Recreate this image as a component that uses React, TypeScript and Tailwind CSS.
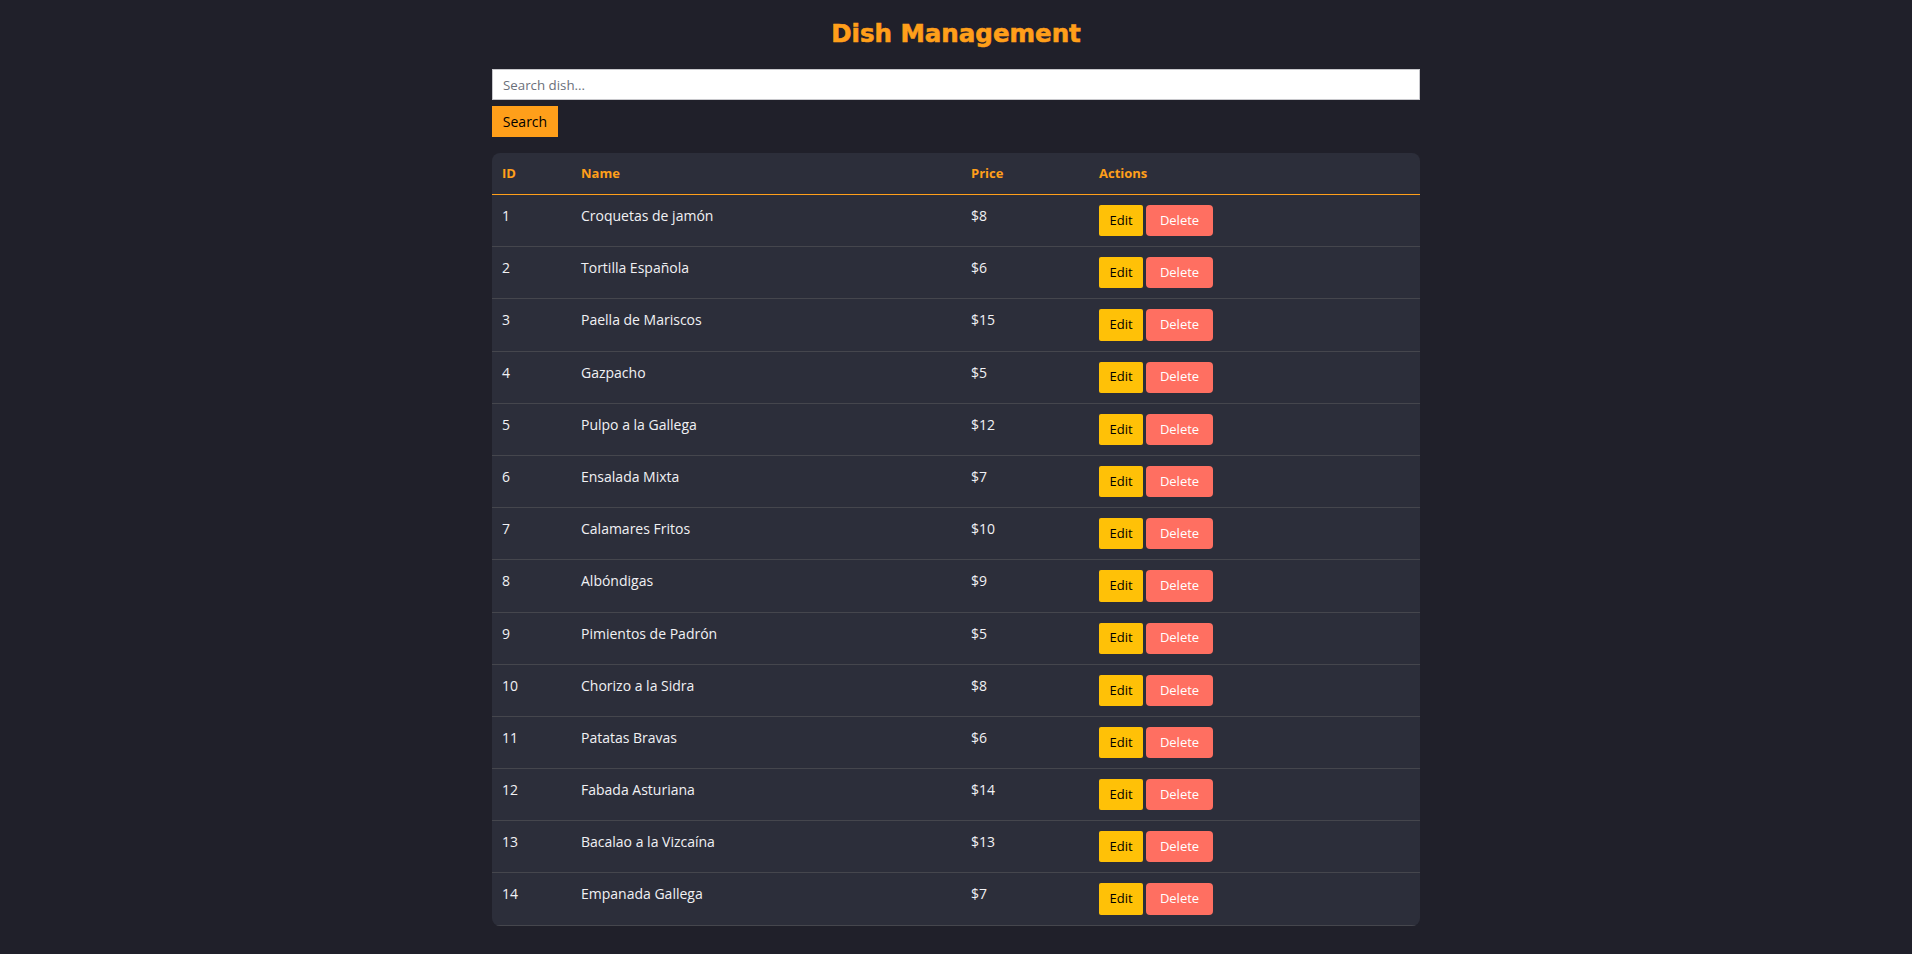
import { useState } from 'react';

const dishes = [
  { id: 1, name: 'Croquetas de jamón', price: 8 },
  { id: 2, name: 'Tortilla Española', price: 6 },
  { id: 3, name: 'Paella de Mariscos', price: 15 },
  { id: 4, name: 'Gazpacho', price: 5 },
  { id: 5, name: 'Pulpo a la Gallega', price: 12 },
  { id: 6, name: 'Ensalada Mixta', price: 7 },
  { id: 7, name: 'Calamares Fritos', price: 10 },
  { id: 8, name: 'Albóndigas', price: 9 },
  { id: 9, name: 'Pimientos de Padrón', price: 5 },
  { id: 10, name: 'Chorizo a la Sidra', price: 8 },
  { id: 11, name: 'Patatas Bravas', price: 6 },
  { id: 12, name: 'Fabada Asturiana', price: 14 },
  { id: 13, name: 'Bacalao a la Vizcaína', price: 13 },
  { id: 14, name: 'Empanada Gallega', price: 7 },
];

export default function App() {
  const [query, setQuery] = useState('');

  return (
    <div className="min-h-screen bg-[#20202a] font-['Open_Sans',sans-serif] text-[#f1f1f4]">
      <div className="w-[928px] mx-auto pt-[20px] pb-10">
        <h1 className="text-center font-['DejaVu_Sans',sans-serif] font-bold text-[24.5px] leading-[28px] text-[#ff9f1a] [-webkit-text-stroke:0.6px_#ff9f1a]">
          Dish Management
        </h1>

        <input
          type="text"
          value={query}
          onChange={(e) => setQuery(e.target.value)}
          placeholder="Search dish..."
          className="block w-full h-[31px] mt-[21px] px-[10px] bg-white border border-[#c8c8cc] text-[13.3px] text-black placeholder:text-[#6b6f7a] outline-none"
        />
        <button className="block mt-[6px] h-[31px] w-[66px] bg-[#ff9f1a] text-black text-[14px]">
          Search
        </button>

        <div className="mt-[16px] rounded-lg bg-[#2c2e3a] overflow-hidden">
          <table className="w-full table-fixed border-collapse">
            <colgroup>
              <col className="w-[79px]" />
              <col className="w-[390px]" />
              <col className="w-[128px]" />
              <col />
            </colgroup>
            <thead>
              <tr className="border-b border-[#ff9f1a]">
                <th className="p-[10px] text-left align-top text-[13px] leading-[21px] font-bold text-[#ff9f1a]">ID</th>
                <th className="p-[10px] text-left align-top text-[13px] leading-[21px] font-bold text-[#ff9f1a]">Name</th>
                <th className="p-[10px] text-left align-top text-[13px] leading-[21px] font-bold text-[#ff9f1a]">Price</th>
                <th className="p-[10px] text-left align-top text-[13px] leading-[21px] font-bold text-[#ff9f1a]">Actions</th>
              </tr>
            </thead>
            <tbody>
              {dishes.map((d) => (
                <tr key={d.id} className="border-b border-[#45464d]">
                  <td className="p-[10px] align-top text-[14px] leading-[21px]">{d.id}</td>
                  <td className="p-[10px] align-top text-[14px] leading-[21px]">{d.name}</td>
                  <td className="p-[10px] align-top text-[14px] leading-[21px]">${d.price}</td>
                  <td className="p-[10px] align-top">
                    <div className="flex gap-[3px]">
                      <button className="h-[31.2px] w-[44px] rounded-[2px] bg-[#ffc107] text-black text-[13px]">Edit</button>
                      <button className="h-[31.2px] w-[67px] rounded-[4px] bg-[#ff6f61] text-white text-[13px]">Delete</button>
                    </div>
                  </td>
                </tr>
              ))}
            </tbody>
          </table>
        </div>
      </div>
    </div>
  );
}
